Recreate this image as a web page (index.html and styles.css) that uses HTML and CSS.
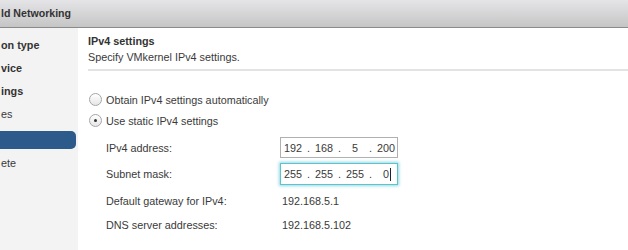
FILE: index.html
```html
<!DOCTYPE html>
<html lang="en">
  <head>
    <meta charset="UTF-8" />
    <title>Add Networking</title>
    <link rel="stylesheet" href="styles.css">
  </head>
  <body>
    <div class="dialog">
      <div class="titlebar">ld Networking</div>
      <div class="main">
        <ul class="steps">
          <li class="step done">on type</li>
          <li class="step done">vice</li>
          <li class="step done">ings</li>
          <li class="step">es</li>
          <li class="step current"></li>
          <li class="step">ete</li>
        </ul>
        <div class="content">
          <div class="section-title">IPv4 settings</div>
          <div class="section-desc">Specify VMkernel IPv4 settings.</div>
          <div class="divider"></div>

          <label class="radio-row">
            <span class="radio"></span>
            Obtain IPv4 settings automatically
          </label>
          <label class="radio-row">
            <span class="radio checked"></span>
            Use static IPv4 settings
          </label>

          <div class="ip-form">
            <div class="field-label">IPv4 address:</div>
            <div class="ip-input">
              <span class="octet">192</span><span class="dot">.</span>
              <span class="octet">168</span><span class="dot">.</span>
              <span class="octet">5</span><span class="dot">.</span>
              <span class="octet">200</span>
            </div>

            <div class="field-label">Subnet mask:</div>
            <div class="ip-input focused">
              <span class="octet">255</span><span class="dot">.</span>
              <span class="octet">255</span><span class="dot">.</span>
              <span class="octet">255</span><span class="dot">.</span>
              <span class="octet">0<span class="caret"></span></span>
            </div>

            <div class="field-label">Default gateway for IPv4:</div>
            <div class="field-value">192.168.5.1</div>

            <div class="field-label">DNS server addresses:</div>
            <div class="field-value">192.168.5.102</div>
          </div>
        </div>
      </div>
    </div>
  </body>
</html>
```

FILE: styles.css
```css
body {
  margin: 0;
  font-family: "Liberation Sans", Arial, sans-serif;
  font-size: 10.8px;
  color: #3a3a3a;
  background: #fff;
}
.dialog {
  width: 628px;
  height: 250px;
  overflow: hidden;
  display: flex;
  flex-direction: column;
}
.titlebar {
  height: 27px;
  line-height: 27px;
  padding-left: 1px;
  font-weight: bold;
  font-size: 10.6px;
  color: #333;
  background: linear-gradient(#e5e5e7, #c5c5c6);
  border-bottom: 1px solid #8a8a8a;
  white-space: nowrap;
}
.main {
  flex: 1;
  display: flex;
}
.steps {
  list-style: none;
  margin: 0;
  padding: 8px 2px 0 0;
  width: 76px;
  background: #f3f3f3;
  display: flex;
  flex-direction: column;
  gap: 5px;
}
.step {
  height: 18px;
  line-height: 18px;
  padding-left: 1px;
  white-space: nowrap;
}
.step.done {
  font-weight: bold;
  color: #333;
}
.step.current {
  margin-top: 3px;
  background: #2c5a8b;
  border-radius: 0 5px 5px 0;
}
.content {
  flex: 1;
  padding: 5px 0 0 10px;
}
.section-title {
  font-weight: bold;
  line-height: 16px;
  color: #333;
}
.section-desc {
  line-height: 16px;
}
.divider {
  margin-top: 4px;
  height: 2px;
  background: #e3e3e3;
}
.radio-row {
  display: flex;
  align-items: center;
  height: 21px;
  gap: 4px;
  padding-left: 1px;
}
.radio-row:first-of-type {
  margin-top: 18px;
}
.radio {
  width: 11px;
  height: 11px;
  border: 1px solid #a6a6a6;
  border-radius: 50%;
  background: linear-gradient(#ffffff, #e6e6e6);
  display: flex;
  align-items: center;
  justify-content: center;
}
.radio.checked::after {
  content: "";
  width: 3px;
  height: 3px;
  border-radius: 50%;
  background: #333;
}
.ip-form {
  display: grid;
  grid-template-columns: 174px 118px;
  grid-template-rows: 21px 22px 21px 18px;
  row-gap: 5px;
  align-items: center;
  margin: 6px 0 0 18px;
}
.ip-input {
  box-sizing: border-box;
  height: 100%;
  border: 1px solid #b0b0b0;
  display: flex;
  align-items: center;
  padding-left: 1px;
}
.ip-input.focused {
  border-color: #5ec2cf;
  box-shadow: 0 0 3px 1px #93d9e3;
}
.octet {
  width: 22px;
  text-align: center;
  position: relative;
}
.dot {
  width: 9px;
  text-align: center;
}
.caret {
  position: absolute;
  top: 0;
  width: 1px;
  height: 13px;
  margin-left: 1px;
  background: #222;
}
.field-value {
  padding-left: 2px;
}
```
